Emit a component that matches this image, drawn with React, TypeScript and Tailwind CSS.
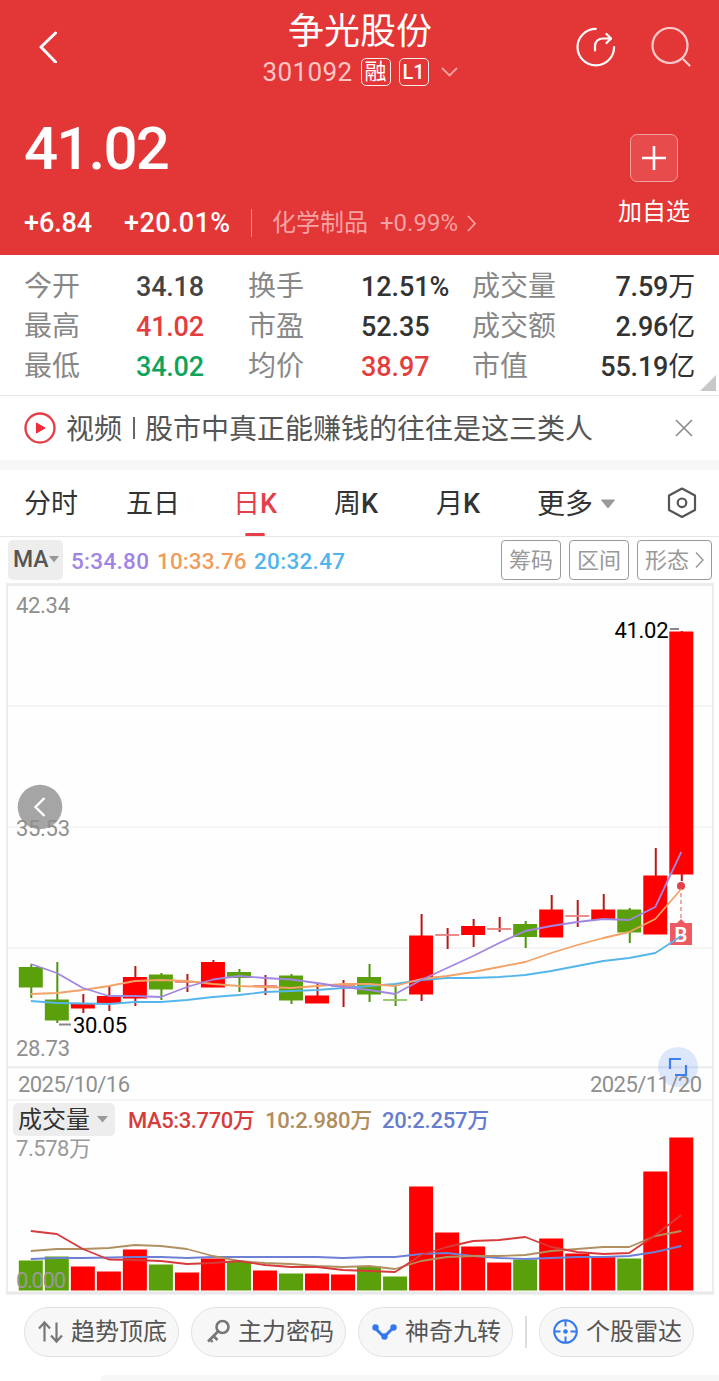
import { Fragment } from "react";

type Candle = {
  up: boolean;
  open: number;
  close: number;
  high: number;
  low: number;
  volume: number;
};

// y positions inside the chart, top to bottom
const candles: Candle[] = [
  { up: false, open: 967, close: 987.5, high: 964, low: 998, volume: 1260.5 },
  { up: false, open: 999.5, close: 1020.5, high: 962, low: 1023, volume: 1256.5 },
  { up: true, open: 1004, close: 1008.5, high: 994, low: 1013, volume: 1266.5 },
  { up: true, open: 996, close: 1004, high: 986, low: 1011, volume: 1271.5 },
  { up: true, open: 977, close: 998.5, high: 966, low: 1006, volume: 1249.5 },
  { up: false, open: 974.5, close: 989.5, high: 973, low: 1000, volume: 1264.5 },
  { up: true, open: 982, close: 982, high: 974, low: 992, volume: 1272.5 },
  { up: true, open: 962, close: 987.5, high: 960, low: 987, volume: 1258.5 },
  { up: false, open: 972, close: 978, high: 969, low: 992, volume: 1262 },
  { up: true, open: 986, close: 986, high: 975, low: 995, volume: 1270.5 },
  { up: false, open: 975.5, close: 1000.5, high: 974, low: 1004, volume: 1273.5 },
  { up: true, open: 995.5, close: 1003.5, high: 984, low: 1003, volume: 1273.5 },
  { up: true, open: 986, close: 986, high: 980, low: 1007, volume: 1274.5 },
  { up: false, open: 977, close: 994.5, high: 964, low: 1002, volume: 1266.5 },
  { up: false, open: 1000, close: 1000, high: 986, low: 1006, volume: 1276.5 },
  { up: true, open: 935.5, close: 994.5, high: 914, low: 1001, volume: 1186.5 },
  { up: true, open: 935, close: 935, high: 928, low: 949, volume: 1232.5 },
  { up: true, open: 926, close: 935, high: 919, low: 947, volume: 1246.5 },
  { up: true, open: 929, close: 929, high: 917, low: 932, volume: 1262.5 },
  { up: false, open: 924, close: 937, high: 921, low: 948, volume: 1259.5 },
  { up: true, open: 909.5, close: 937.5, high: 895, low: 937, volume: 1238.5 },
  { up: true, open: 916, close: 916, high: 900, low: 927, volume: 1253.5 },
  { up: true, open: 909.5, close: 920, high: 894, low: 919, volume: 1257 },
  { up: false, open: 909.5, close: 932.5, high: 908, low: 943, volume: 1258.5 },
  { up: true, open: 875.5, close: 934.5, high: 848, low: 934, volume: 1171.5 },
  { up: true, open: 631.5, close: 874.5, high: 631, low: 881, volume: 1137.5 },
];

const ma5 = [964, 973, 988, 996, 996, 997, 987, 979.5, 976, 978, 979.5, 983, 987, 990, 994, 980, 968, 956, 943, 931, 926, 922, 919, 920, 907, 852];
const ma10 = [994, 993, 990, 986, 981, 980, 981, 984, 986, 987, 988, 986, 984, 984, 986, 979, 976, 972, 967, 962, 953, 945, 938, 932, 919, 889];
const ma20 = [1001, 1003, 1003.5, 1004, 1002, 1002, 1000, 997, 995, 992, 991, 990, 988, 986, 984, 980, 978, 978, 977, 975, 971, 966, 961, 958, 953, 936];

const volMa5 = [1231, 1234, 1249, 1259.5, 1260, 1261, 1264, 1263, 1261, 1265, 1267, 1267, 1270, 1271, 1272, 1255, 1247, 1241, 1240, 1237, 1247, 1252, 1254, 1253, 1235, 1215];
const volMa10 = [1251, 1249, 1249, 1248, 1245, 1246, 1249, 1256, 1261, 1263, 1264, 1266, 1267, 1266, 1269, 1261, 1257, 1256, 1256, 1255, 1251, 1249, 1247, 1247, 1236, 1231];
const volMa20 = [1259, 1258, 1258, 1257.5, 1257, 1257, 1258, 1257, 1257, 1257, 1257, 1257, 1258, 1257, 1257, 1254, 1253, 1256, 1258, 1259, 1258, 1257, 1257, 1256, 1252, 1246];

const x = (i: number) => 30.8 + i * 26.02;
const toPoints = (ys: number[]) => ys.map((y, i) => `${x(i)},${y}`).join(" ");

const stats = [
  ["今开", "34.18", "text-[#444]", "换手", "12.51%", "text-[#333]", "成交量", "7.59万"],
  ["最高", "41.02", "text-[#e53d3d]", "市盈", "52.35", "text-[#333]", "成交额", "2.96亿"],
  ["最低", "34.02", "text-[#0fa45c]", "均价", "38.97", "text-[#e53d3d]", "市值", "55.19亿"],
];

function Header() {
  return (
    <div className="h-[255px] bg-[#e33637] text-white">
      <div className="flex h-[100px] pl-[38px] pr-[27px]">
        <svg className="mt-[31px] h-[32px] w-[20px]" viewBox="0 0 20 32" fill="none">
          <path d="M17.500 2 3 16l14.500 15" stroke="white" strokeWidth="3" strokeLinecap="round" strokeLinejoin="round" />
        </svg>
        <div className="ml-[202px] flex w-[200px] flex-col items-center pt-[10px]">
          <div className="text-[36px] leading-[44px]">争光股份</div>
          <div className="flex h-[36px] items-center">
            <span className="w-[90px] whitespace-nowrap text-[26px] leading-[30px] tracking-[0.4px] text-[#ffc6c6]">301092</span>
            <span className="ml-[8px] flex h-[28px] w-[30px] items-center justify-center rounded-[5px] border border-white/90 text-[22px] leading-[26px]">融</span>
            <span className="ml-[8px] flex h-[28px] w-[30px] items-center justify-center rounded-[5px] border border-white/90 text-[20px] font-medium leading-[26px]">L1</span>
            <svg className="ml-[12px] h-[10px] w-[17px] shrink-0" viewBox="0 0 17 10" fill="none">
              <path d="m1 1 7.500 7.500L16 1" stroke="#f4a3a3" strokeWidth="1.800" />
            </svg>
          </div>
        </div>
        <div className="ml-auto flex gap-[33px] pt-[26px]">
          <svg className="h-[42px] w-[42px]" viewBox="0 0 42 42" fill="none" stroke="white" strokeWidth="2.200" strokeLinecap="round" strokeLinejoin="round">
            <path d="M20.800 2.800A18.300 18.300 0 1 0 39.100 21.100" />
            <path d="M20 24.500v-4.500c0-4.500 3.500-7.500 8-7.500h8" />
            <path d="m31.500 8 4.500 4.500-4.500 4.500" />
          </svg>
          <svg className="h-[42px] w-[42px]" viewBox="0 0 42 42" fill="none" stroke="#ffcaca" strokeWidth="2.200" strokeLinecap="round">
            <circle cx="20" cy="19.500" r="17.500" />
            <path d="m33.500 33.500 6 6" />
          </svg>
        </div>
      </div>

      <div className="flex h-[155px] justify-between pl-[24px] pr-[29px]">
        <div>
          <div className="h-[98px] pt-[15px] text-[60px] font-medium leading-[68px] tracking-[-1.800px]">41.02</div>
          <div className="flex h-[50px] items-center text-[27px] font-medium">
            <span className="w-[100px] tracking-[-0.1px]">+6.84</span>
            <span className="w-[127px] tracking-[0.4px]">+20.01%</span>
            <span className="h-[28px] w-px bg-[#f08d8d]" />
            <span className="ml-[20px] w-[108px] text-[24px] font-normal text-[#f5a2a2]">化学制品</span>
            <span className="w-[86px] text-[24px] font-normal text-[#f5a2a2]">+0.99%</span>
            <svg className="h-[17px] w-[11px]" viewBox="0 0 11 17" fill="none">
              <path d="m2 1 7 7.500L2 16" stroke="#f5a2a2" strokeWidth="1.800" />
            </svg>
          </div>
        </div>
        <div className="flex w-[72px] flex-col items-center pt-[34px]">
          <div className="flex h-[48px] w-[48px] items-center justify-center rounded-[7px] border border-[#f2a0a0] bg-[#e74b4c]">
            <svg className="h-[24px] w-[24px]" viewBox="0 0 24 24">
              <path d="M12 0v24M0 12h24" stroke="white" strokeWidth="2.600" />
            </svg>
          </div>
          <div className="mt-[14px] text-[24px] leading-[32px]">加自选</div>
        </div>
      </div>
    </div>
  );
}

function Stats() {
  return (
    <div className="flex h-[141px] items-start border-b border-[#e8e8e8] pl-[24px] pt-[12px] text-[27px] leading-[40px]">
      <div className="grid w-[671px] shrink-0 grid-cols-[112px_112px_113px_111px_100px_123px]">
        {stats.map((row) => (
          <Fragment key={row[0]}>
            <div className="text-[28px] text-[#888]">{row[0]}</div>
            <div className={`font-medium tracking-[-0.2px] ${row[2]}`}>{row[1]}</div>
            <div className="text-[28px] text-[#888]">{row[3]}</div>
            <div className={`font-medium tracking-[-0.1px] ${row[5]}`}>{row[4]}</div>
            <div className="text-[28px] text-[#888]">{row[6]}</div>
            <div className="whitespace-nowrap text-right font-medium tracking-[-0.2px] text-[#333]">
              {row[7].slice(0, -1)}
              <span className="font-normal">{row[7].slice(-1)}</span>
            </div>
          </Fragment>
        ))}
      </div>
      <svg className="ml-[5px] mt-[108px] h-[16px] w-[16px]" viewBox="0 0 16 16">
        <path d="M16 0v16H0z" fill="#c8c8c8" />
      </svg>
    </div>
  );
}

function NewsBar() {
  return (
    <div className="flex h-[64px] items-center pl-[24px] pr-[26px] text-[28px] text-[#555]">
      <svg className="h-[32px] w-[32px]" viewBox="0 0 32 32">
        <circle cx="16" cy="16" r="14.500" fill="none" stroke="#e3414a" strokeWidth="2.400" />
        <path d="M12.500 11v10l8.500-5z" fill="#f02c38" stroke="#f02c38" strokeLinejoin="round" />
      </svg>
      <span className="ml-[10px] pt-[3px]">视频</span>
      <span className="mx-[10.500px] h-[22px] w-[2px] bg-[#666]" />
      <span className="pt-[3px]">股市中真正能赚钱的往往是这三类人</span>
      <svg className="ml-auto h-[18px] w-[18px]" viewBox="0 0 18 18">
        <path d="m1 1 16 16M17 1 1 17" stroke="#888" strokeWidth="1.600" />
      </svg>
    </div>
  );
}

function Tabs() {
  return (
    <div className="flex h-[67px] items-stretch border-b border-[#e6e6e6] pl-[24px] text-[27px] leading-[69px] text-[#333]">
      <div className="w-[102px]">分时</div>
      <div className="w-[107px]">五日</div>
      <div className="flex w-[101px] flex-col text-[#e5404a]">
        <div className="h-[63px] font-medium"><span className="font-normal">日</span>K</div>
        <div className="ml-[12px] h-[3px] w-[20px] rounded-sm bg-[#e5404a]" />
      </div>
      <div className="w-[102px] font-medium"><span className="font-normal">周</span>K</div>
      <div className="w-[101px] font-medium"><span className="font-normal">月</span>K</div>
      <div className="text-[28px]">更多</div>
      <svg className="ml-[7px] mt-[29px] h-[10px] w-[16px]" viewBox="0 0 16 10">
        <path d="M1.500 1h13L8 9z" fill="#999" stroke="#999" strokeLinejoin="round" />
      </svg>
      <svg className="ml-[49px] mt-[16px] h-[33px] w-[32px]" viewBox="0 0 32 33" fill="none" stroke="#555" strokeWidth="2.200" strokeLinejoin="round">
        <path d="M17 2.500 30 9.500v14.500L17 31 4 24V9.500z" />
        <circle cx="17" cy="16.800" r="4.300" />
      </svg>
    </div>
  );
}

function MaBar() {
  return (
    <div className="flex h-[46px] items-start pl-[8px] pt-[3px] text-[22.500px] leading-[42px]">
      <div className="flex h-[40px] w-[55px] items-center rounded-[5px] bg-[#ededed] pl-[5px] text-[23px] font-medium text-[#555]">
        MA
        <svg className="mb-[2px] h-[7px] w-[10px] shrink-0" viewBox="0 0 10 7">
          <path d="M0 0h10L5 6.500z" fill="#999" />
        </svg>
      </div>
      <div className="ml-[8px] w-[86px] whitespace-nowrap font-medium tracking-[0.3px] text-[#a183e6]">5:34.80</div>
      <div className="w-[97px] whitespace-nowrap font-medium tracking-[0.1px] text-[#f09c5b]">10:33.76</div>
      <div className="whitespace-nowrap font-medium tracking-[0.3px] text-[#50b4ef]">20:32.47</div>
      <div className="ml-auto mr-[7px] flex gap-[8px] text-[22px] leading-[40px] text-[#999]">
        <div className="h-[40px] w-[60px] rounded-[4px] border border-[#999] text-center">筹码</div>
        <div className="h-[40px] w-[60px] rounded-[4px] border border-[#999] text-center">区间</div>
        <div className="flex h-[40px] w-[75px] rounded-[4px] border border-[#999] pl-[7px]">
          形态
          <svg className="ml-[6px] mt-[10px] h-[18px] w-[9px]" viewBox="0 0 9 18" fill="none">
            <path d="m1 1.500 7 7.500-7 7.500" stroke="#999" strokeWidth="1.500" />
          </svg>
        </div>
      </div>
    </div>
  );
}

function PriceChart() {
  return (
    <svg className="block h-[518px] w-[704px]" viewBox="8 583 704 518" fontSize="22">
      <path d="M8 584.500H712" stroke="#ececec" strokeWidth="3" />
      <path d="M8 706H712M8 827H712M8 948H712M8 1100H712" stroke="#f2f2f2" strokeWidth="1.500" />
      <path d="M8 1067.300H712" stroke="#ebebeb" strokeWidth="2" />

      {candles.map((c, i) => {
        const flat = c.open === c.close;
        return (
          <g key={i}>
            <path d={`M${x(i) + 0.5} ${c.high}V${c.low}`} stroke={c.up ? "#b91818" : "#4c9608"} strokeWidth="2" />
            {flat ? (
              <path d={`M${x(i) - 12} ${c.open}h24`} stroke={c.up ? "#e98080" : "#93c263"} strokeWidth="1.800" />
            ) : (
              <rect x={x(i) - 12} y={c.open} width="24" height={c.close - c.open} fill={c.up ? "#ff0000" : "#5aa00a"} />
            )}
          </g>
        );
      })}

      <path d="M681 886v34" stroke="#ee8a90" strokeWidth="1.500" strokeDasharray="4 3" />
      <circle cx="681" cy="886" r="4" fill="#e5404a" />
      <path d="M670 923h7l4-4 4 4h7v22h-22z" fill="#ee5a63" />
      <text x="681" y="941.500" textAnchor="middle" fill="white" fontSize="20" fontWeight="700">B</text>

      <g fill="none" strokeWidth="1.800" strokeLinejoin="round">
        <polyline points={toPoints(ma20)} stroke="#55b6ec" />
        <polyline points={toPoints(ma10)} stroke="#f2a266" />
        <polyline points={toPoints(ma5)} stroke="#a186e2" />
      </g>

      <circle cx="40" cy="807" r="22.300" fill="#a5a5a5" />
      <path d="m44.500 798-9 9 9 9" fill="none" stroke="white" strokeWidth="2.400" />
      <circle cx="678" cy="1067" r="20" fill="#477ef5" fillOpacity="0.180" />
      <path d="M670 1069v-10h11M686 1065v10h-11" fill="none" stroke="#3f7fee" strokeWidth="2.200" />

      <g fill="#8f8f8f">
        <text x="16" y="613" textLength="54">42.34</text>
        <text x="16" y="836" textLength="54">35.53</text>
        <text x="16" y="1056" textLength="54">28.73</text>
        <text x="18" y="1092" textLength="112">2025/10/16</text>
        <text x="590" y="1092" textLength="112">2025/11/20</text>
      </g>
      <g fill="black">
        <text x="614.500" y="638" textLength="54">41.02</text>
        <text x="73" y="1033" textLength="54">30.05</text>
      </g>
      <path d="M670 629h9M59 1024.500h12" stroke="#888" strokeWidth="1.800" />
    </svg>
  );
}

function VolumeChart() {
  return (
    <svg className="block h-[158px] w-[704px] overflow-visible" viewBox="8 1137 704 158" fontSize="22">
      {candles.map((c, i) => (
        <rect key={i} x={x(i) - 12} y={c.volume} width="24" height={1290.5 - c.volume} fill={c.up ? "#ff0000" : "#5aa00a"} />
      ))}
      <g fill="none" strokeWidth="1.800" strokeLinejoin="round">
        <polyline points={toPoints(volMa20)} stroke="#6d80d6" />
        <polyline points={toPoints(volMa10)} stroke="#b09060" />
        <polyline points={toPoints(volMa5)} stroke="#d83a3a" />
      </g>
      <g fill="#999">
        <text x="16" y="1156" textLength="75">7.578万</text>
        <text x="16" y="1288" textLength="50">0.000</text>
      </g>
      <path d="M8 1293H712" stroke="#e8e8e8" strokeWidth="3" />
    </svg>
  );
}

function Chart() {
  return (
    <div className="ml-[6px] w-[708px] border-x-2 border-[#ececec] bg-[#fefefe]">
      <PriceChart />
      <div className="flex h-[36px] items-center pl-[5px] text-[22px] leading-[36px]">
        <div className="mt-px flex h-[33px] w-[102px] items-center rounded-[5px] bg-[#ededed] pl-[5px] text-[24px] text-[#333]">
          成交量
          <svg className="ml-[7px] h-[7px] w-[11px] shrink-0" viewBox="0 0 11 7">
            <path d="M0 0h11L5.500 6.500z" fill="#999" />
          </svg>
        </div>
        <div className="ml-[13px] mt-[3px] w-[137px] whitespace-nowrap font-medium tracking-[-0.4px] text-[#d63c3c]">MA5:3.770万</div>
        <div className="mt-[3px] w-[117px] whitespace-nowrap font-medium tracking-[-0.2px] text-[#af8d5c]">10:2.980万</div>
        <div className="mt-[3px] whitespace-nowrap font-medium tracking-[-0.2px] text-[#667ccf]">20:2.257万</div>
      </div>
      <VolumeChart />
    </div>
  );
}

function Tools() {
  const pill = "flex h-[50px] w-[155px] items-center rounded-full border border-[#e2e2e2] bg-[#f7f7f7] pl-[12px]";
  return (
    <div className="flex h-[80px] items-start gap-[12px] pl-[24px] pt-[12px] text-[24px] leading-[50px] text-[#555]">
      <div className={pill}>
        <svg className="mr-[7px] h-[28px] w-[27px]" viewBox="0 0 27 28" fill="none" stroke="#777" strokeWidth="2.200">
          <path d="M7.500 23.500V5M2 10.500l5.500-6 5.500 6M19.500 4.500V23M14 17.500l5.500 6 5.500-6" />
        </svg>
        趋势顶底
      </div>
      <div className={pill}>
        <svg className="mr-[6px] h-[28px] w-[28px]" viewBox="0 0 28 28" fill="none" stroke="#777" strokeWidth="2.600">
          <circle cx="18.500" cy="9" r="6" />
          <path d="M14.500 13 4 23.500M9.500 18l4 4M5.500 20.500l3 3.500" />
        </svg>
        主力密码
      </div>
      <div className={pill}>
        <svg className="mr-[6px] h-[28px] w-[28px]" viewBox="0 0 28 28">
          <path d="m4 10 9 9 9-9" fill="none" stroke="#3478f0" strokeWidth="3" />
          <circle cx="4.500" cy="9.500" r="3.200" fill="#3478f0" />
          <circle cx="13.500" cy="18.500" r="3.200" fill="#3478f0" />
          <circle cx="22.500" cy="9.500" r="3.200" fill="#3478f0" />
        </svg>
        神奇九转
      </div>
      <div className="mt-[9px] h-[32px] w-[2px] bg-[#ddd]" />
      <div className={pill}>
        <svg className="mr-[6px] h-[28px] w-[28px]" viewBox="0 0 28 28" fill="none" stroke="#3478f0" strokeWidth="2">
          <circle cx="13.500" cy="13.500" r="11.300" />
          <path d="M13.500 2v6.500M13.500 18.500V25M2 13.500h6.500M18.500 13.500H25" />
          <circle cx="13.500" cy="13.500" r="2.300" fill="#3478f0" stroke="none" />
        </svg>
        个股雷达
      </div>
    </div>
  );
}

export default function App() {
  return (
    <div className="h-[1381px] w-[719px] overflow-hidden bg-white font-[Roboto,'Noto_Sans_CJK_SC',sans-serif]">
      <Header />
      <Stats />
      <NewsBar />
      <div className="h-[10px] bg-[#f7f7f7]" />
      <Tabs />
      <MaBar />
      <Chart />
      <Tools />
      <div className="ml-[100px] h-[6px] rounded-tl-[6px] bg-[#f7f7f7]" />
    </div>
  );
}
